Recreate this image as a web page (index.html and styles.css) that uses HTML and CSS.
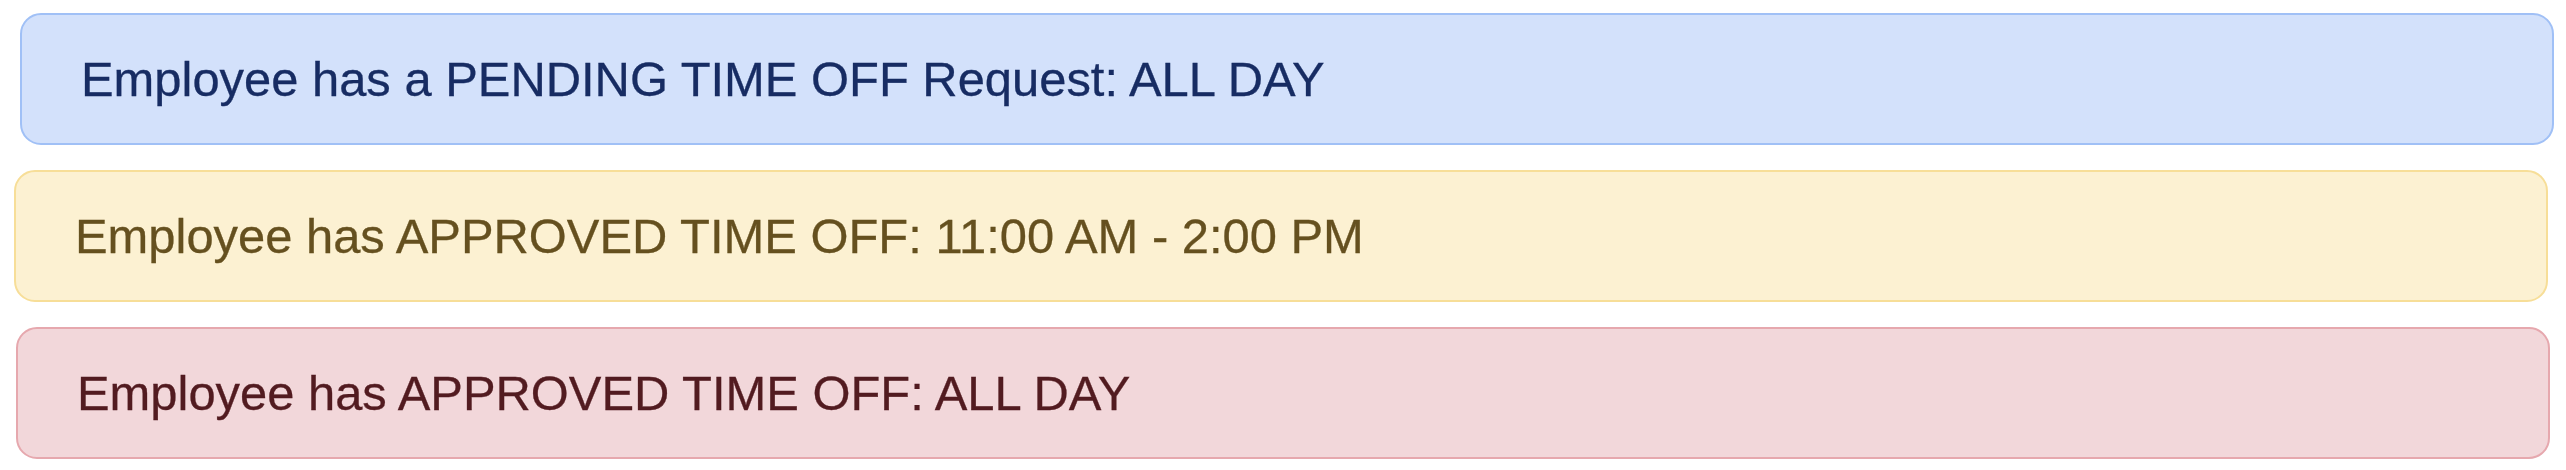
FILE: index.html
```html
<!DOCTYPE html>
<html lang="en">
<head>
<meta charset="utf-8">
<title>Time off alerts</title>
<link rel="stylesheet" href="styles.css">
</head>
<body>
<div class="alerts">
  <div class="alert alert-pending">Employee has a PENDING TIME OFF Request: ALL DAY</div>
  <div class="alert alert-partial">Employee has APPROVED TIME OFF: 11:00 AM - 2:00 PM</div>
  <div class="alert alert-allday">Employee has APPROVED TIME OFF: ALL DAY</div>
</div>
</body>
</html>
```
FILE: styles.css
```css
html, body {
  margin: 0;
  padding: 0;
  background: #ffffff;
}
.alerts {
  display: flex;
  flex-direction: column;
  gap: 25px;
  padding-top: 13px;
}
.alert {
  box-sizing: border-box;
  width: 2534px;
  height: 132px;
  display: flex;
  align-items: center;
  padding-left: 59px;
  border: 2px solid;
  border-radius: 21px;
  font-family: "Liberation Sans", Arial, Helvetica, sans-serif;
  font-size: 48.9px;
  line-height: 1;
  -webkit-text-stroke: 0.3px currentColor;
}
.alert-pending {
  margin-left: 20px;
  background: #d3e1fb;
  border-color: #a0c0f6;
  color: #172c63;
}
.alert-partial {
  margin-left: 14px;
  background: #fcf1d2;
  border-color: #f7de98;
  color: #65501f;
}
.alert-allday {
  margin-left: 16px;
  background: #f2d7da;
  border-color: #e6a8ae;
  color: #521b20;
}
```
